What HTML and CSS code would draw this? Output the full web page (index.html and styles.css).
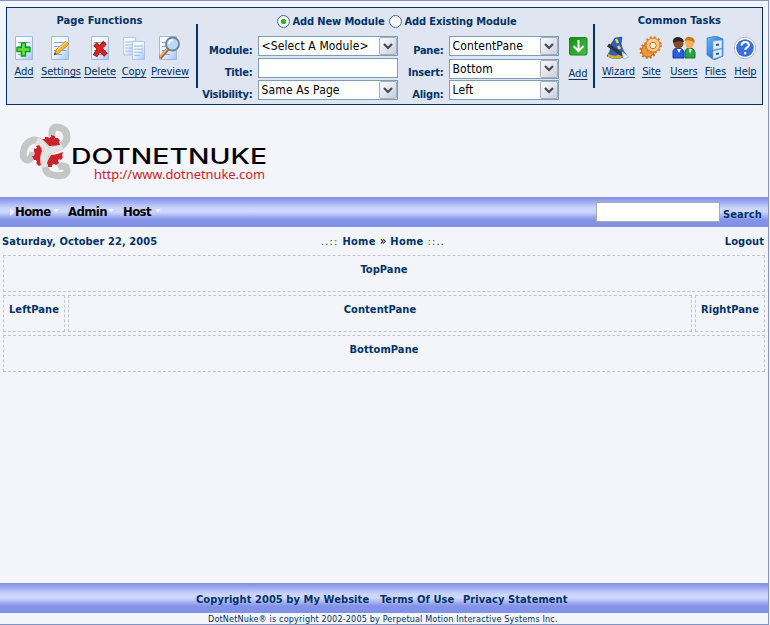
FILE: index.html
```html
<!DOCTYPE html>
<html lang="en">
<head>
<meta charset="utf-8">
<title>My Website</title>
<link rel="stylesheet" href="styles.css">
</head>
<body>
<svg width="0" height="0" class="defs">
  <defs>
    <linearGradient id="paper" x1="0" y1="0" x2="1" y2="1"><stop offset="0" stop-color="#fff"/><stop offset=".5" stop-color="#edf3ff"/><stop offset="1" stop-color="#a4c2f8"/></linearGradient>
    <linearGradient id="blue" x1="0" y1="0" x2="1" y2="1"><stop offset="0" stop-color="#65bdf5"/><stop offset="1" stop-color="#1450b5"/></linearGradient>
    <linearGradient id="green" x1="0" y1="0" x2="1" y2="1"><stop offset="0" stop-color="#138b16"/><stop offset="1" stop-color="#4dc044"/></linearGradient>
    <g id="page"><path d="M.5 .5h17v23H.5z" fill="url(#paper)" stroke="#9fb9e5"/><path d="M3 6.5h12M3 10.5h12M3 14.5h12M3 18.5h8" stroke="#7fa5e8"/></g>
  </defs>
</svg>
<div class="site">
  <div class="panel">
    <section class="tools left">
      <h2>Page Functions</h2>
      <div class="items">
        <a><svg width="18" height="24"><use href="#page"/><path d="M6.500 7h4v4.500h4.500v4h-4.500v4.500h-4v-4.500h-4.500v-4h4.500z" fill="#65e239" stroke="#139a18" stroke-width="1.400"/></svg><span>Add</span></a>
        <a><svg width="20" height="24"><use href="#page"/><path d="M3 19l2-5 10-9 3 3-10 9z" fill="#f6b62d" stroke="#b9832b" stroke-width=".8"/><path d="M6 14L16 5" stroke="#ffe384"/><path d="M3 19l1-2.500 1.500 1.500z" fill="#333"/></svg><span>Settings</span></a>
        <a><svg width="18" height="24"><use href="#page"/><path d="M4 8l11 11M14 6.500Q9 11 4 20" fill="none" stroke="#8e1717" stroke-width="5"/><path d="M4.500 8.500l10 10M14 7.500Q9 11 4.500 19.500" fill="none" stroke="#dc2418" stroke-width="3.400"/></svg><span>Delete</span></a>
        <a><svg width="22" height="24"><use href="#page" transform="translate(0 1) scale(.72 .76)"/><use href="#page" transform="translate(9 5) scale(.72 .78)"/></svg><span>Copy</span></a>
        <a><svg width="22" height="24"><use href="#page"/><path d="M1 22l8-9" stroke="#a06a35" stroke-width="3.500"/><path d="M1 21l7-8" stroke="#efb477" stroke-width="1.500"/><circle cx="13.500" cy="8" r="6.500" fill="#b6dcf5" stroke="#77818d" stroke-width="1.800"/><path d="M10 8a4 4 0 0 1 4-4" stroke="#fff" stroke-width="2" fill="none"/></svg><span>Preview</span></a>
      </div>
    </section>
    <i class="bar"></i>
    <section class="module">
      <div class="modes"><i class="radio on"></i><b>Add New Module</b><i class="radio second"></i><b class="existing">Add Existing Module</b></div>
      <div class="form">
        <div class="labels"><label>Module:</label><label>Title:</label><label>Visibility:</label></div>
        <div class="fields">
          <div class="select ext"><span>&lt;Select A Module&gt;</span><i><svg width="10" height="7"><path d="M1 1l4 4 4-4" /></svg></i></div>
          <input class="box" type="text" aria-label="Title">
          <div class="select"><span>Same As Page</span><i><svg width="10" height="7"><path d="M1 1l4 4 4-4" /></svg></i></div>
        </div>
        <div class="labels two"><label>Pane:</label><label>Insert:</label><label>Align:</label></div>
        <div class="fields narrow">
          <div class="select"><span>ContentPane</span><i><svg width="10" height="7"><path d="M1 1l4 4 4-4" /></svg></i></div>
          <div class="select"><span>Bottom</span><i><svg width="10" height="7"><path d="M1 1l4 4 4-4" /></svg></i></div>
          <div class="select"><span>Left</span><i><svg width="10" height="7"><path d="M1 1l4 4 4-4" /></svg></i></div>
        </div>
        <a class="add"><svg width="19" height="19"><rect x=".5" y=".5" width="17.500" height="17.500" rx="1.500" fill="url(#green)" stroke="#158421"/><path d="M9.500 3v11M4.500 9l5 5 5-5" fill="none" stroke="#fff" stroke-width="2"/></svg><span>Add</span></a>
      </div>
    </section>
    <i class="bar"></i>
    <section class="tools right">
      <h2>Common Tasks</h2>
      <div class="items">
        <a><svg width="24" height="24"><path d="M1 20Q5 16 5 8L9 2 16 1 15 8Q16 14 21 20Q9 25 1 20" fill="#2861c4" stroke="#163c80" stroke-width=".6"/><path d="M2 18q8 4 15-1l2 3q-8 5-17 1z" fill="#d5ad22"/><path d="M10 3l2 4M12 10l2 3" stroke="#efd245" stroke-width="2.500"/><path d="M2 9l15 10" stroke="#34353a" stroke-width="3.500"/><path d="M16 16l7 5-5 2z" fill="#eefaff" stroke="#9dcce9"/></svg><span>Wizard</span></a>
        <a><svg width="24" height="24"><circle cx="9" cy="14.500" r="6.500" fill="#ed9a35" stroke="#b9601b"/><circle cx="9" cy="14.500" r="7.500" fill="none" stroke="#c8701d" stroke-width="2" stroke-dasharray="2 2"/><circle cx="14" cy="9" r="7" fill="#ffc98a" stroke="#d0752a"/><circle cx="14" cy="9" r="7.900" fill="none" stroke="#d9822f" stroke-width="2" stroke-dasharray="2.200 2"/><circle cx="14" cy="9.500" r="3.200" fill="#fff5df" stroke="#c66b1c"/></svg><span>Site</span></a>
        <a><svg width="24" height="24"><path d="M1 22v-6q0-4 5-4t6 4v6z" fill="#285de0" stroke="#153ba5"/><path d="M13 22v-7q1-3 5-3t5 4v6z" fill="#2ca347" stroke="#14762e"/><circle cx="6.500" cy="7.500" r="5" fill="#874927"/><path d="M1 7q-1-5 4-6 6 0 7 5Q5 4 1 7" fill="#292424"/><ellipse cx="17.500" cy="7" rx="4.500" ry="5.500" fill="#f0b15c"/><path d="M12.500 5q1-5 6-4 5 1 4 6-4-4-10-2" fill="#c67b1b"/><path d="M5 13l2 4 2-4M17 13l1 5 2-5" fill="#fff"/></svg><span>Users</span></a>
        <a><svg width="20" height="24"><path d="M2 2l9-2 7 3v17l-9 4-7-5z" fill="url(#blue)" stroke="#286dba" stroke-width=".6"/><path d="M8 5l10-2v17l-9 4z" fill="#3a83d5"/><path d="M8 5l9-1v8l-9 2zM8 15l9-2v7l-9 3z" fill="#ddecfb" stroke="#7caadb" stroke-width=".7"/><path d="M11 9l3-.5M11 18l3-.5" stroke="#235b9c" stroke-width="2"/></svg><span>Files</span></a>
        <a><svg width="24" height="24"><circle cx="12" cy="12" r="10.700" fill="#fff" stroke="#aeb7c8"/><circle cx="12" cy="12" r="8.800" fill="#3971d7"/><path d="M8.500 9.500q.4-3.500 3.800-3.500 3.500 0 3.500 3 0 1.500-2 2.700-1.500.9-1.500 2.300M12.200 16v2.200" fill="none" stroke="#fff" stroke-width="2.100"/></svg><span>Help</span></a>
      </div>
    </section>
  </div>

  <header class="logo">
    <svg width="250" height="64" viewBox="0 0 250 64">
      <g fill="none" stroke="#c5c6c6" stroke-width="7" stroke-linejoin="round">
        <path d="M28 32Q46 29 48 19Q48 9 38 8Q32 8 33 17" />
        <path d="M28 32Q22 20 15 21Q6 23 4.500 32Q3 41 9 41Q13 40 14 33"/>
        <path d="M28 32Q23 48 29 54Q36 58 45 56Q50 53 47 48Q43 46 39 48"/>
      </g>
      <path d="M28 32Q36 31 43 27M28 32Q24 24 18 21M28 32Q24 41 26 48" fill="none" stroke="#e4e3e2" stroke-width="6"/>
      <g fill="#cc2229">
        <path d="M23 20l3 0 0-2 3 0 1 1 2-1 0-2 4 1 0 2 3 0 2 3-1 1 1 3Q34 27 30 27Q27 23 23 20z"/>
        <path d="M20 26l-3 1 1 2-2 1-1-1 0 4 1 1-1 3-2 0 2 4 2 0 1 2-1 1 3 3 2-1Q20 39 23 32Q22 28 20 26z"/>
        <path d="M32 36Q37 36 44 33l-1 4 1 1-2 3-2-1-1 2 1 2-3 2-2-1-2 1 0 2-4 0 0-2-1-2Q29 41 32 36z"/>
      </g>
      <text class="brand" x="52" y="45" textLength="196" lengthAdjust="spacingAndGlyphs">DOTNETNUKE</text>
      <text class="tm" x="242" y="33">™</text>
      <text class="url" x="75" y="60" textLength="171" lengthAdjust="spacingAndGlyphs">http://www.dotnetnuke.com</text>
    </svg>
  </header>

  <nav class="band menu">
    <i class="here"></i><b class="home">Home</b><i class="down"></i><b class="admin">Admin</b><i class="down"></i><b class="host">Host</b><i class="down"></i>
    <input type="text" aria-label="Search"><b class="search">Search</b>
  </nav>
  <div class="crumbs"><b class="date">Saturday, October 22, 2005</b><div class="trail"><span>..::</span><b>Home</b><em>»</em><b>Home</b><span>::..</span></div><b class="logout">Logout</b></div>
  <main class="panes">
    <div class="pane top"><b>TopPane</b></div>
    <div class="pane lp"><b>LeftPane</b></div><div class="pane cp"><b>ContentPane</b></div><div class="pane rp"><b>RightPane</b></div>
    <div class="pane top"><b>BottomPane</b></div>
  </main>
  <footer>
    <div class="band legal"><b class="copy">Copyright 2005 by My Website</b><b class="terms">Terms Of Use</b><b class="privacy">Privacy Statement</b></div>
    <div class="credit"><span>DotNetNuke® is copyright 2002-2005 by Perpetual Motion Interactive Systems Inc.</span></div>
  </footer>
</div>
</body>
</html>
```
FILE: styles.css
```css
* { box-sizing: border-box; }
body { margin: 0; background: #f3f5fa; color: #003366; font: 11px/14px "DejaVu Sans Condensed", "DejaVu Sans", sans-serif; }
.defs { display: block; }
.site { width: 769px; height: 625px; border: solid #7f93c9; border-width: 1px 1px 1px 0; display: flex; flex-direction: column; white-space: nowrap; }
i { display: block; font-style: normal; flex: none; }
svg { display: block; flex: none; }
b, h2, label { font-weight: bold; font-size: 11px; letter-spacing: .08px; }

.panel { height: 98px; margin: 6px 5px 0 6px; border: 1px solid #003366; background: #e0e5f2; display: flex; flex: none; }
.bar { width: 2px; height: 64px; margin-top: 16px; background: #003366; }
.left { width: 189px; padding-left: 4px; }
.right { width: 167px; padding-left: 5px; }
h2 { margin: 6px 0 8px; height: 14px; text-align: center; }
.left h2 { width: 177px; }
.right h2 { width: 158px; }
.items { display: grid; }
.left .items { grid-template-columns: 26px 48px 30px 38px 34px; }
.right .items { grid-template-columns: 36px 30px 35px 28px 32px; }
.items a, .add { display: flex; flex-direction: column; align-items: center; text-decoration: underline; text-underline-offset: 2px; letter-spacing: -.1px; }
.items span { margin-top: 5px; }

.module { width: 397px; }
.modes { display: flex; align-items: center; height: 14px; margin: 6px 0 8px 79px; letter-spacing: -.1px; }
.radio { width: 13px; height: 13px; border: 1px solid #426b94; border-radius: 50%; background: #f7f7f5; margin-right: 3px; }
.radio.on { background: radial-gradient(circle, #33b333 0 2.500px, #f7f7f5 3px); }
.modes b { width: 96px; letter-spacing: -.12px; padding-top: 2px; }
.form { display: flex; }
.labels { width: 55px; text-align: right; display: grid; grid-template-rows: 22px 22px 20px; }
.labels label { padding-top: 8px; letter-spacing: -.2px; }
.labels.two { width: 46px; }
.fields { width: 140px; margin-left: 5px; display: grid; grid-template-rows: 20px 20px 20px; gap: 2px; }
.narrow { width: 110px; grid-template-rows: 21px 20px 20px; gap: 1.500px; }
.select, .box { height: 20px; border: 1px solid #7f9db9; background: #fff; color: #000; }
.select { display: flex; justify-content: space-between; align-items: center; padding-left: 3px; font-size: 12px; letter-spacing: .13px; }
.box { width: 140px; padding: 0 4px; }
.select i { width: 18px; height: 18px; border: 1px solid #a5afc0; border-radius: 2px; background: linear-gradient(135deg, #fafbfd, #c9ced9); display: flex; align-items: center; justify-content: center; }
.select path { fill: none; stroke: #444b56; stroke-width: 2.200; }
.add { width: 19px; margin: 1px 0 0 10px; }
.add span { margin-top: 11px; }

.logo { height: 92px; padding: 14px 0 0 19px; flex: none; }
.brand { font: 500 21.500px Inter, sans-serif; fill: #000; }
.tm { font: 5px Inter, sans-serif; }
.url { font: 12.500px "Noto Sans", sans-serif; fill: #cc2229; }

.band { height: 30px; flex: none; background: linear-gradient(#8191e5 0, #929eed 3px, #cbd4fd 11px, #ced7fe 15px, #a9b4f2 19px, #8393e8 23px, #7f91e8); display: flex; }
.menu { padding-left: 10px; color: #000; }
.menu b { font-size: 13px; line-height: 30px; letter-spacing: -.6px; }
.menu .home { width: 36px; }
.menu .admin { width: 38px; }
.menu .host { width: 30px; }
.here { border: solid transparent; border-width: 4px 0 4px 4px; border-left-color: #eef2ff; height: 8px; margin: 11px 1px 0 0; }
.down { border: 3px solid transparent; border-top-color: #eef2ff; border-bottom: 0; height: 3px; margin: 12px 9px 0 2px; width: 6px; }
.menu input { width: 124px; height: 20px; margin: 5px 3px 0 auto; border: 1px solid #aaa; background: #fff; padding: 0 3px; }
.menu .search { width: 40px; margin-right: 5px; font-size: 11px; line-height: 35px; color: #003366; letter-spacing: .08px; }
.crumbs { height: 28px; padding: 0 4px 0 2px; display: grid; grid-template-columns: 1fr auto 1fr; line-height: 29px; }
.trail { display: flex; gap: 4px; color: #444; letter-spacing: 1.1px; }
.trail b { color: #003366; letter-spacing: .3px; }
.trail em { font-style: normal; font-size: 12px; letter-spacing: 0; color: #000; }
.logout { text-align: right; }

.panes { width: 762px; margin-left: 3px; display: grid; grid-template-columns: 62px 624px 70px; grid-auto-rows: 37px; gap: 3px; justify-content: space-between; }
.pane { border: 1px dashed #c4c6ca; text-align: center; padding-top: 7px; }
.top { grid-column: 1 / -1; }
footer { margin-top: auto; }
.legal { padding-left: 196px; line-height: 33px; }
.copy { width: 184px; }
.terms { width: 83px; }
.credit { height: 11px; padding-left: 208px; line-height: 12px; font-size: 9px; letter-spacing: .15px; }
```
